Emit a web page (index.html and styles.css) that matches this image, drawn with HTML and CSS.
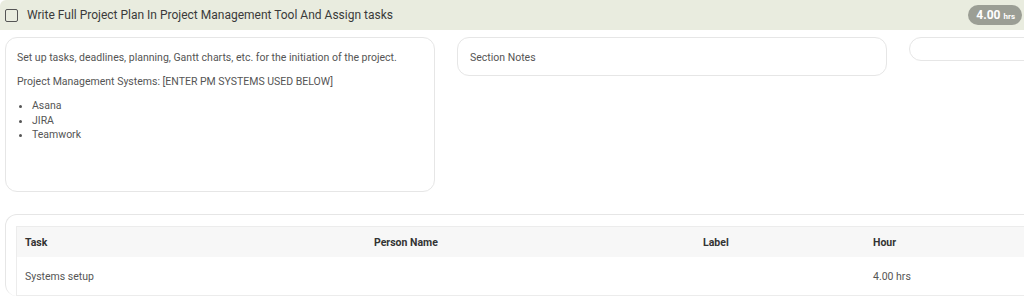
FILE: index.html
```html
<!DOCTYPE html>
<html lang="en">

<head>
   <meta charset="UTF-8">
   <meta name="viewport" content="width=device-width, initial-scale=1.0">
   <title>Task Section</title>
   <link rel="stylesheet" href="styles.css">
</head>

<body>
   <div class="section">
      <div class="section-head">
         <div class="title">
            <span class="checkbox"></span>
            <span>Write Full Project Plan In Project Management Tool And Assign tasks</span>
         </div>
         <span class="badge">4.00 <small>hrs</small></span>
      </div>

      <div class="cards">
         <div class="card desc">
            <p>Set up tasks, deadlines, planning, Gantt charts, etc. for the initiation of the project.</p>
            <p>Project Management Systems: [ENTER PM SYSTEMS USED BELOW]</p>
            <ul>
               <li>Asana</li>
               <li>JIRA</li>
               <li>Teamwork</li>
            </ul>
         </div>
         <div class="card notes">Section Notes</div>
         <div class="card extra"></div>
      </div>

      <div class="table-card">
         <table>
            <thead>
               <tr>
                  <th class="col-task">Task</th>
                  <th class="col-person">Person Name</th>
                  <th class="col-label">Label</th>
                  <th>Hour</th>
               </tr>
            </thead>
            <tbody>
               <tr>
                  <td>Systems setup</td>
                  <td></td>
                  <td></td>
                  <td>4.00 hrs</td>
               </tr>
            </tbody>
         </table>
      </div>
   </div>
</body>

</html>
```

FILE: styles.css
```css
body {
   font-family: Roboto, 'Liberation Sans', sans-serif;
   margin: 0;
   padding: 0;
   font-size: 10.5px;
   color: #555;
   background-color: #fff;
   overflow: hidden;
   width: 1024px;
   height: 301px;
}

.section {
   width: 1400px;
}

.section-head {
   width: 1024px;
   height: 30px;
   box-sizing: border-box;
   padding: 0 2px 0 5px;
   display: flex;
   justify-content: space-between;
   align-items: center;
   background-color: #e9ecdf;
   border-top-left-radius: 6px;
}

.title {
   display: flex;
   align-items: center;
   gap: 9px;
   font-size: 12px;
   color: #3a3a3a;
}

.checkbox {
   width: 11px;
   height: 11px;
   border: 1.5px solid #555;
   border-radius: 2px;
}

.badge {
   background-color: #9b9e95;
   color: #fff;
   font-weight: bold;
   font-size: 12px;
   padding: 3px 7px 3px 8px;
   border-radius: 10px;
}

.badge small {
   font-size: 8px;
}

.cards {
   display: flex;
   align-items: flex-start;
   gap: 22px;
   padding: 7px 0 0 5px;
}

.card {
   width: 430px;
   box-sizing: border-box;
   border: 1px solid #e6e6e6;
   border-radius: 12px;
   line-height: 14.5px;
}

.desc {
   height: 155px;
   padding: 13px 11px;
}

.desc p {
   margin: 0 0 9.5px;
}

.desc ul {
   margin: 0;
   padding-left: 15px;
}

.notes {
   height: 39px;
   padding: 13px 12px 11px;
}

.extra {
   height: 24px;
}

.table-card {
   margin: 22px 0 0 5px;
   width: 1300px;
   padding: 11px 10px 0;
   border: 1px solid #e6e6e6;
   border-radius: 12px;
   border-bottom: none;
}

table {
   width: 100%;
   border-collapse: collapse;
   border: 1px solid #ececec;
}

th {
   text-align: left;
   background-color: #f7f7f7;
   color: #333;
   font-weight: bold;
   height: 30px;
   padding: 0 8px;
}

td {
   height: 38px;
   padding: 0 8px;
   color: #555;
}

.col-task {
   width: 333px;
}

.col-person {
   width: 313px;
}

.col-label {
   width: 154px;
}
```
